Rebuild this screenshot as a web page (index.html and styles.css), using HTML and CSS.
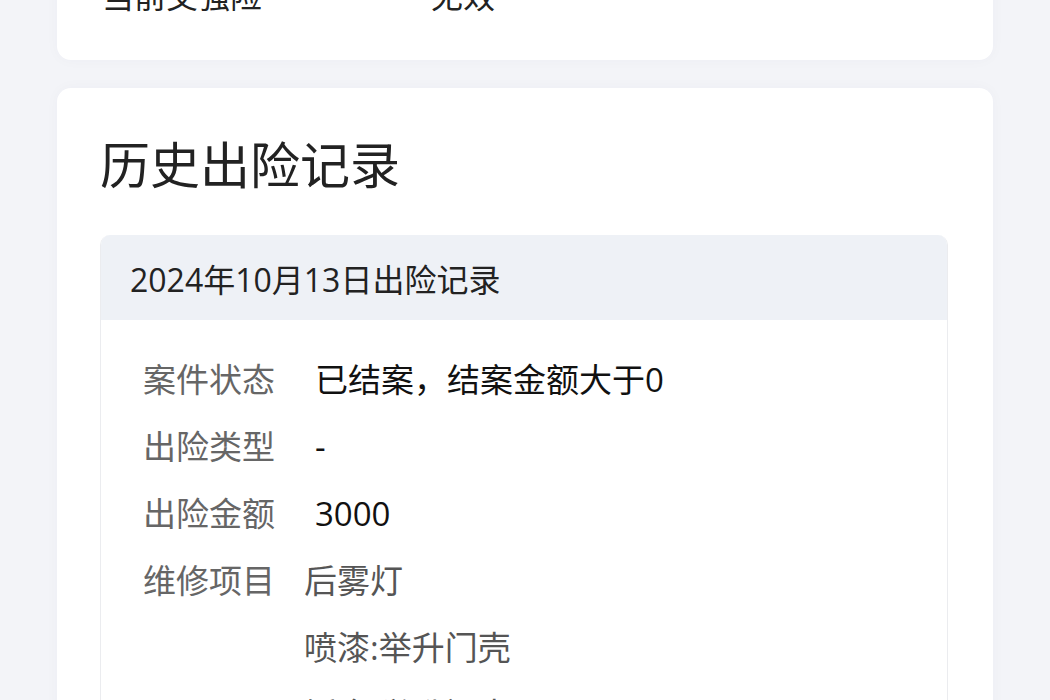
FILE: index.html
```html
<!DOCTYPE html>
<html lang="zh-CN">
<head>
  <meta charset="UTF-8" />
  <title>出险记录</title>
  <link rel="stylesheet" href="styles.css">
</head>
<body>
  <div class="page">
    <div class="card card-top">
      <div class="info-row">
        <span class="info-label">当前交强险</span>
        <span class="info-value">无效</span>
      </div>
    </div>

    <div class="card card-history">
      <h2 class="card-title">历史出险记录</h2>

      <div class="record">
        <div class="record-head">2024年10月13日出险记录</div>
        <div class="record-body">
          <div class="row">
            <span class="label">案件状态</span>
            <span class="value">已结案，结案金额大于0</span>
          </div>
          <div class="row">
            <span class="label">出险类型</span>
            <span class="value">-</span>
          </div>
          <div class="row">
            <span class="label">出险金额</span>
            <span class="value">3000</span>
          </div>
          <div class="row">
            <span class="label">维修项目</span>
            <div class="repairs">
              <div>后雾灯</div>
              <div>喷漆:举升门壳</div>
              <div>钣金:举升门壳</div>
            </div>
          </div>
        </div>
      </div>
    </div>
  </div>
</body>
</html>
```

FILE: styles.css
```css
body {
  margin: 0;
  background: #f3f4f8;
  font-family: "Open Sans", "Noto Sans CJK SC", sans-serif;
  color: #222;
  overflow: hidden;
}

.page {
  padding: 0 57px;
}

.card {
  background: #fff;
  border-radius: 14px;
  box-shadow: 0 0 14px rgba(30, 40, 80, 0.03);
}

/* top card is scrolled mostly out of view */
.card-top {
  margin-top: -40px;
  padding: 20px 45px 48px 45px;
}

.info-row {
  display: flex;
  font-size: 32px;
  line-height: 32px;
}

.info-label {
  width: 329px;
}

.card-history {
  margin-top: 28px;
  padding: 47px 45px 40px 43px;
}

.card-title {
  margin: 0 0 40px 0;
  font-size: 50px;
  line-height: 60px;
  font-weight: 400;
  color: #222;
}

.record {
  border-radius: 10px;
  overflow: hidden;
  border: 1px solid #ebecef;
  border-top: none;
}

.record-head {
  height: 85px;
  display: flex;
  align-items: center;
  padding-left: 29px;
  background: #eef1f6;
  font-size: 32px;
  color: #222;
}

.record-body {
  padding: 26px 0 0 42px;
  background: #fff;
}

.row {
  display: flex;
  font-size: 33px;
  line-height: 67px;
}

.label {
  width: 132px;
  flex-shrink: 0;
  color: #666;
}

.value {
  margin-left: 40px;
  color: #111;
}

.repairs {
  margin-left: 29px;
  color: #555;
}
```
